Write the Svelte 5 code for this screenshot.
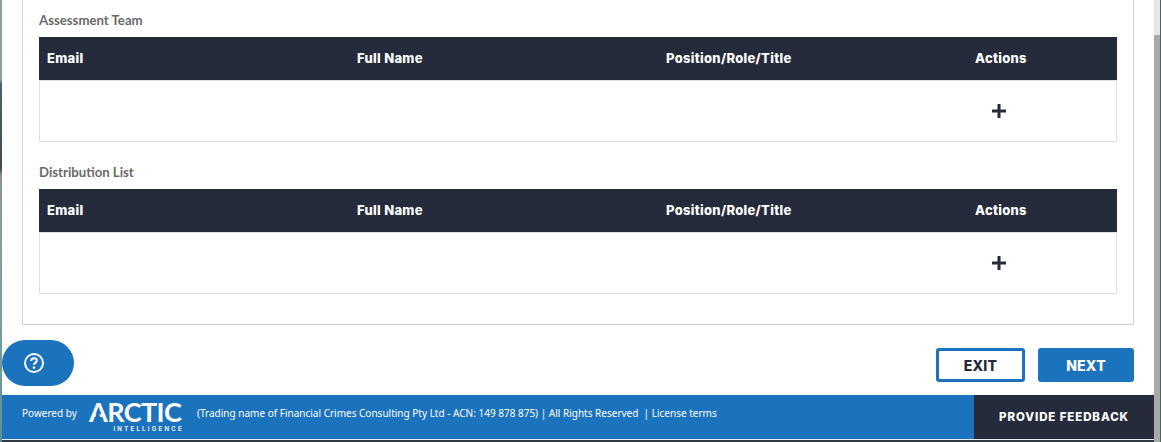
<script>
  const columns = ['Email', 'Full Name', 'Position/Role/Title', 'Actions'];
  const sections = ['Assessment Team', 'Distribution List'];
</script>

<div class="page">
  <div class="backdrop"></div>
  <div class="window">
    <main class="panel">
      <div class="box">
        {#each sections as title}
          <section class="section">
            <h3>{title}</h3>
            <table>
              <thead>
                <tr>
                  {#each columns as c}<th>{c}</th>{/each}
                </tr>
              </thead>
              <tbody>
                <tr>
                  <td></td><td></td><td></td>
                  <td class="action">
                    <button class="add" aria-label="Add">
                      <svg width="14" height="14" viewBox="0 0 14 14"><path d="M0 7h14M7 0v14" stroke="#262b3b" stroke-width="3" fill="none"/></svg>
                    </button>
                  </td>
                </tr>
              </tbody>
            </table>
          </section>
        {/each}
      </div>
      <div class="actions">
        <button class="btn exit">EXIT</button>
        <button class="btn next">NEXT</button>
      </div>
      <button class="help" aria-label="Help">
        <svg width="20" height="20" viewBox="0 0 20 20" fill="none">
          <circle cx="10" cy="10" r="9" stroke="#fff" stroke-width="1.9"/>
          <path d="M7.2 7.9c0-1.7 1.2-2.7 2.9-2.7 1.6 0 2.7 1 2.7 2.4 0 1.1-.6 1.7-1.5 2.3-.9.6-1.3 1-1.3 2" stroke="#fff" stroke-width="2"/>
          <circle cx="10" cy="14.6" r="1.3" fill="#fff"/>
        </svg>
      </button>
    </main>
    <footer class="footer">
      <div class="legal">
        <span class="powered">Powered by</span>
        <div class="logo">
          <span class="mark"><span class="a">A</span>RCTIC</span>
          <span class="sub">INTELLIGENCE</span>
        </div>
        <span class="terms">(Trading name of Financial Crimes Consulting Pty Ltd - ACN: 149 878 875) | All Rights Reserved &nbsp;| License terms</span>
      </div>
      <button class="feedback">PROVIDE FEEDBACK</button>
    </footer>
    <div class="underline"></div>
  </div>
  <div class="scrollbar"><div class="thumb"></div></div>
  <div class="edge"></div>
</div>

<style>
  :global(body) {
    margin: 0;
    background: #2b3a44;
  }
  .page {
    display: flex;
    width: 1161px;
    height: 442px;
    overflow: hidden;
    font-family: "Inter", "Liberation Sans", sans-serif;
  }
  .backdrop {
    width: 2px;
    flex: none;
    background: linear-gradient(180deg, #8fa29a 0, #8fa29a 18%, #4a6470 19%, #3f4a4f 38%, #8b9a8e 40%, #7fa0a0 70%, #5f8f9c 100%);
  }
  .window {
    width: 1152px;
    flex: none;
    display: flex;
    flex-direction: column;
    background: #fff;
  }
  .panel {
    position: relative;
    height: 395px;
    padding: 0 20px;
    box-sizing: border-box;
  }
  .box {
    height: 325px;
    box-sizing: border-box;
    border: 1px solid #d2d2d2;
    border-top: 0;
    padding: 0 16px;
  }
  .section {
    padding-top: 13px;
    height: 152px;
    box-sizing: border-box;
  }
  h3 {
    margin: 0 0 9px;
    font-family: "Lato", sans-serif;
    font-size: 13.2px;
    line-height: 15px;
    font-weight: 700;
    color: #6a6a6a;
  }
  table {
    width: 1078px;
    border-collapse: separate;
    border-spacing: 0;
    table-layout: fixed;
  }
  th {
    background: #262b3b;
    color: #fff;
    height: 43px;
    padding: 0 0 2px 8px;
    text-align: left;
    font-size: 13px;
    font-weight: 800;
    letter-spacing: .3px;
    box-sizing: border-box;
  }
  th:nth-child(1) { width: 310px; }
  th:nth-child(2), th:nth-child(3) { width: 309px; }
  th:nth-child(4) { width: 150px; }
  tbody tr {
    height: 62px;
  }
  tbody td {
    padding: 0;
    border-top: 1px solid #e2e2e2;
    border-bottom: 1px solid #e2e2e2;
  }
  tbody td:first-child { border-left: 1px solid #e2e2e2; }
  tbody td:last-child { border-right: 1px solid #e2e2e2; }
  .add {
    display: block;
    margin: 0 0 0 25px;
    padding: 0;
    border: 0;
    background: none;
    height: 14px;
    line-height: 0;
  }
  .actions {
    display: flex;
    justify-content: flex-end;
    gap: 13px;
    margin-top: 23px;
  }
  .btn {
    height: 34px;
    border-radius: 3px;
    font-family: inherit;
    font-size: 14px;
    font-weight: 800;
    letter-spacing: .2px;
    box-sizing: border-box;
    padding: 0;
  }
  .exit {
    width: 89px;
    background: #fff;
    border: 3px solid #1c73bd;
    color: #262b3b;
  }
  .next {
    width: 96px;
    background: #1c73bd;
    border: 0;
    color: #fff;
  }
  .help {
    position: absolute;
    left: 0;
    top: 340px;
    width: 72px;
    height: 46px;
    border: 0;
    border-radius: 23px;
    background: #1c73bd;
    padding: 0 0 0 22px;
    text-align: left;
    line-height: 0;
  }
  .footer {
    height: 44px;
    flex: none;
    display: flex;
    background: #1c73bd;
    color: #fff;
  }
  .legal {
    flex: 1;
    display: flex;
    align-items: flex-start;
    font-family: "Noto Sans", "Open Sans", sans-serif;
    font-size: 10px;
    line-height: 14px;
  }
  .powered {
    margin: 11px 0 0 20px;
    width: 67px;
    flex: none;
  }
  .logo {
    width: 93px;
    margin-right: 15px;
    flex: none;
    display: flex;
    flex-direction: column;
    align-items: flex-end;
    padding-top: 6px;
  }
  .mark {
    align-self: flex-start;
    font-family: "Lato", sans-serif;
    font-weight: 700;
    font-size: 27px;
    line-height: 21px;
    letter-spacing: -.6px;
    white-space: nowrap;
  }
  .a {
    position: relative;
    display: inline-block;
  }
  .a::after {
    content: "";
    position: absolute;
    left: 5px;
    right: 5.6px;
    bottom: 1px;
    height: 11px;
    background: #1c73bd;
    clip-path: polygon(50% 0, 100% 100%, 0 100%);
  }
  .sub {
    margin-top: 3px;
    font-family: "Inter", sans-serif;
    font-size: 6px;
    line-height: 7px;
    font-weight: 600;
    letter-spacing: 2.3px;
    margin-right: -2px;
    white-space: nowrap;
  }
  .terms {
    margin-top: 11px;
    white-space: nowrap;
  }
  .feedback {
    width: 180px;
    flex: none;
    background: #262b3b;
    color: #fff;
    border: 0;
    padding: 0;
    font-family: inherit;
    font-size: 11.5px;
    font-weight: 800;
    letter-spacing: .9px;
  }
  .underline {
    height: 3px;
    flex: none;
    background: linear-gradient(180deg, #e8ecef 0, #e8ecef 33%, #2f3a42 34%);
  }
  .scrollbar {
    width: 6px;
    flex: none;
    background: #e6e6e6;
    padding-top: 35px;
    box-sizing: border-box;
  }
  .thumb {
    height: 100%;
    background: #a8a8a8;
  }
  .edge {
    width: 1px;
    flex: none;
    background: #3e6a6e;
  }
</style>
